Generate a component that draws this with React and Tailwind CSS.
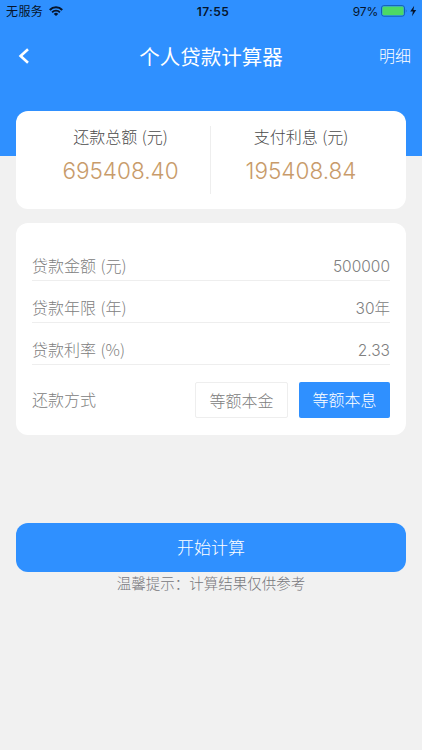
import React, { useState } from "react";

const summary = [
  { label: "还款总额", unit: "(元)", value: "695408.40" },
  { label: "支付利息", unit: "(元)", value: "195408.84" },
];

const fields = [
  { label: "贷款金额", unit: "(元)", value: "500000" },
  { label: "贷款年限", unit: "(年)", value: "30年" },
  { label: "贷款利率", unit: "(%)", value: "2.33" },
];

const WifiIcon = () => (
  <svg width="14" height="10" viewBox="0 0 14 10" className="ml-[6px]">
    <path d="M0.8 3.9 A8.6 8.6 0 0 1 13.2 3.9" fill="none" stroke="#06142b" strokeWidth="2.1" />
    <path d="M3.1 6.3 A5.4 5.4 0 0 1 10.9 6.3" fill="none" stroke="#06142b" strokeWidth="1.9" />
    <path d="M7 10 L4.8 7.9 A3.1 3.1 0 0 1 9.2 7.9 Z" fill="#06142b" />
  </svg>
);

const BatteryIcon = () => (
  <svg width="37" height="12" viewBox="0 0 37 12" className="ml-[3px]">
    <rect x="0.5" y="0.6" width="23" height="10.6" rx="2.4" fill="none" stroke="#155fb4" />
    <rect x="1.4" y="1.5" width="21.2" height="8.8" rx="1.4" fill="#4cd964" />
    <path d="M24.8 4 Q26.3 5.9 24.8 7.8 Z" fill="#155fb4" />
    <path d="M33.2 0.8 L29.2 6.6 H31.9 L31 11.2 L35.2 5.1 H32.4 Z" fill="#06142b" />
  </svg>
);

const StatusBar = () => (
  <div className="grid grid-cols-3 items-center h-[22px] pl-[6px] pr-1 text-[12px] leading-[21px] text-[#06142b]">
    <div className="flex items-center whitespace-nowrap">
      <span className="tracking-[0.4px]">无服务</span>
      <WifiIcon />
    </div>
    <div className="pl-[2px] text-center font-semibold tracking-[0.4px]">17:55</div>
    <div className="flex items-center justify-end">
      <span className="tracking-[-0.2px]">97%</span>
      <BatteryIcon />
    </div>
  </div>
);

const App = () => {
  const [method, setMethod] = useState("等额本息");

  return (
    <div className="w-[422px] h-[750px] overflow-hidden bg-[#f1f1f1] font-['Inter','Noto_Sans_CJK_SC',sans-serif]">
      <header className="h-[156px] bg-[#2f90ff]">
        <StatusBar />
        <nav className="grid grid-cols-[100px_1fr_100px] items-center h-[68px] text-white">
          <button className="pl-[18px]">
            <svg width="12" height="18" viewBox="0 0 12 18">
              <path d="M10 2.3 L2.6 9 L10 15.7" fill="none" stroke="white" strokeWidth="2.6" />
            </svg>
          </button>
          <h1 className="pt-[4px] text-center text-[20.5px] font-normal">个人贷款计算器</h1>
          <button className="pr-[11px] text-right text-[16px] font-light">明细</button>
        </nav>
      </header>

      <main className="-mt-[45px] px-4">
        {/* Totals */}
        <section className="flex h-[98px] rounded-[12px] bg-white">
          {summary.map((item, i) => (
            <div key={item.label} className="flex flex-1 items-center">
              <div className={`flex-1 pb-[9px] text-center ${i === 0 ? "pl-[15px]" : "pr-[15px]"}`}>
                <p className="font-['Noto_Sans_CJK_SC',sans-serif] text-[16px] leading-6 font-light text-[#4a4a4a] [word-spacing:1px]">
                  {item.label} {item.unit}
                </p>
                <p className="mt-[7px] text-[22.5px] leading-8 font-light text-[#c89b6a]">{item.value}</p>
              </div>
              {i === 0 && <div className="h-[68px] w-px bg-[#eeeeee]" />}
            </div>
          ))}
        </section>

        {/* Loan form */}
        <section className="mt-[14px] h-[212px] rounded-[12px] bg-white px-4 pt-4 text-[16px] font-light text-[#808080]">
          {fields.map((field) => (
            <div key={field.label} className="flex h-[42px] items-end justify-between border-b border-[#eeeeee] leading-6">
              <span className="pb-[3px] font-['Noto_Sans_CJK_SC',sans-serif] [word-spacing:1px]">
                {field.label} {field.unit}
              </span>
              <span className="pb-px text-[15.5px]">{field.value}</span>
            </div>
          ))}
          <div className="mt-[17px] flex h-9 items-center">
            <span className="flex-1">还款方式</span>
            {["等额本金", "等额本息"].map((name) => (
              <button
                key={name}
                onClick={() => setMethod(name)}
                className={
                  method === name
                    ? "ml-[11px] h-9 w-[91px] rounded-[2px] bg-[#2f90ff] text-white"
                    : "ml-[11px] h-9 w-[93px] rounded-[2px] border border-[#eeeeee] pt-px"
                }
              >
                {name}
              </button>
            ))}
          </div>
        </section>

        <button className="mt-[88.4px] block h-[49px] w-full rounded-[12px] bg-[#2f90ff] pt-[2px] text-[17px] font-light text-white">
          开始计算
        </button>
        <p className="pt-px text-center text-[14.5px] leading-[22px] font-light text-[#77777c]">温馨提示：计算结果仅供参考</p>
      </main>
    </div>
  );
};

export default App;
